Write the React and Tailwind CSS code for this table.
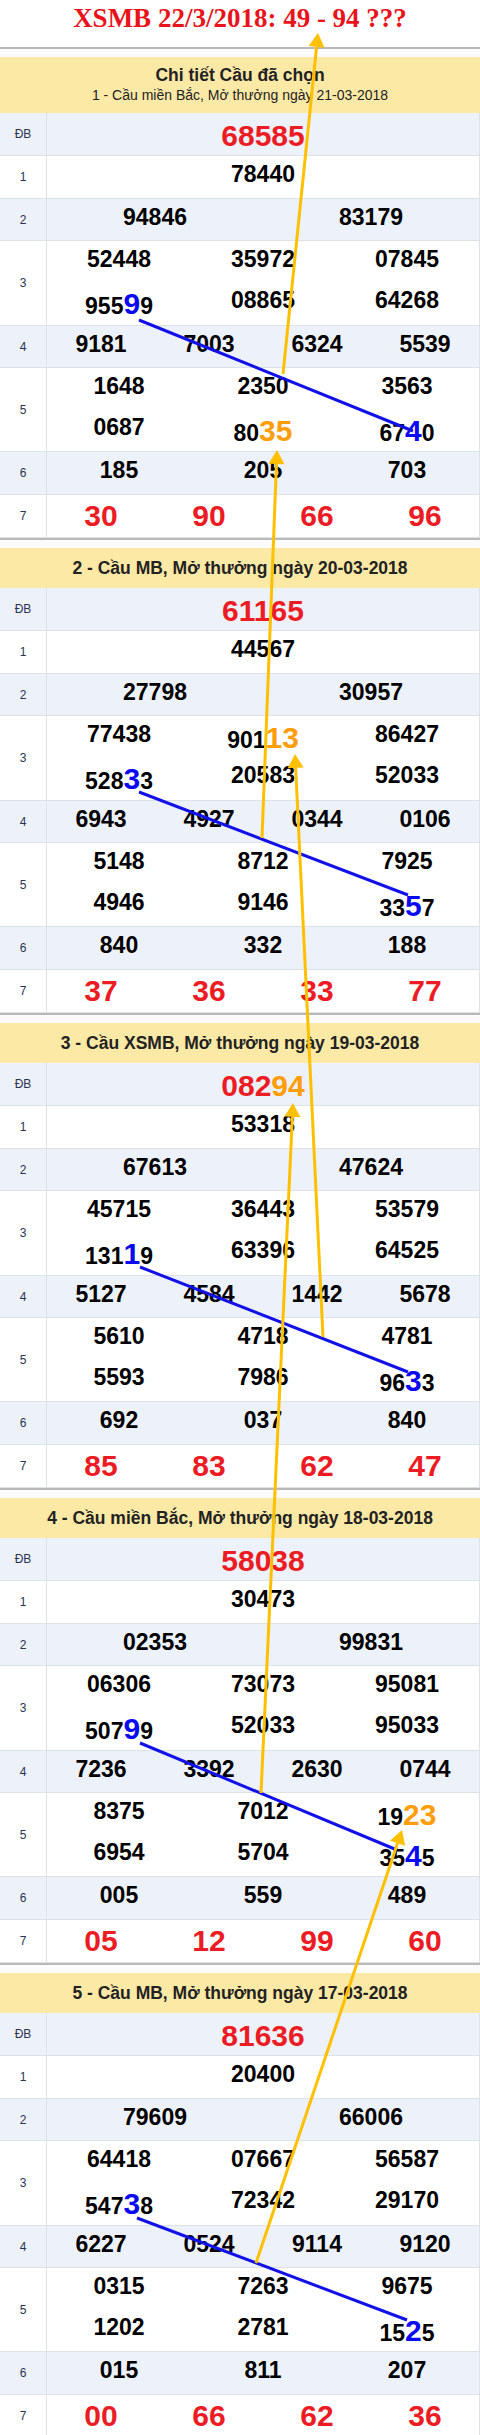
import React from "react";

const sections = [
  {
    head: ["Chi tiết Cầu đã chọn", "1 - Cầu miền Bắc, Mở thưởng ngày 21-03-2018"],
    db: "68585",
    r1: "78440",
    r2: ["94846", "83179"],
    r3: ["52448", "35972", "07845", "955[9]9", "08865", "64268"],
    r4: ["9181", "7003", "6324", "5539"],
    r5: ["1648", "2350", "3563", "0687", "80{35}", "67[4]0"],
    r6: ["185", "205", "703"],
    r7: ["30", "90", "66", "96"],
  },
  {
    head: ["2 - Cầu MB, Mở thưởng ngày 20-03-2018"],
    db: "61165",
    r1: "44567",
    r2: ["27798", "30957"],
    r3: ["77438", "901{13}", "86427", "528[3]3", "20583", "52033"],
    r4: ["6943", "4927", "0344", "0106"],
    r5: ["5148", "8712", "7925", "4946", "9146", "33[5]7"],
    r6: ["840", "332", "188"],
    r7: ["37", "36", "33", "77"],
  },
  {
    head: ["3 - Cầu XSMB, Mở thưởng ngày 19-03-2018"],
    db: "082{94}",
    r1: "53318",
    r2: ["67613", "47624"],
    r3: ["45715", "36443", "53579", "131[1]9", "63396", "64525"],
    r4: ["5127", "4584", "1442", "5678"],
    r5: ["5610", "4718", "4781", "5593", "7986", "96[3]3"],
    r6: ["692", "037", "840"],
    r7: ["85", "83", "62", "47"],
  },
  {
    head: ["4 - Cầu miền Bắc, Mở thưởng ngày 18-03-2018"],
    db: "58038",
    r1: "30473",
    r2: ["02353", "99831"],
    r3: ["06306", "73073", "95081", "507[9]9", "52033", "95033"],
    r4: ["7236", "3392", "2630", "0744"],
    r5: ["8375", "7012", "19{23}", "6954", "5704", "35[4]5"],
    r6: ["005", "559", "489"],
    r7: ["05", "12", "99", "60"],
  },
  {
    head: ["5 - Cầu MB, Mở thưởng ngày 17-03-2018"],
    db: "81636",
    r1: "20400",
    r2: ["79609", "66006"],
    r3: ["64418", "07667", "56587", "547[3]8", "72342", "29170"],
    r4: ["6227", "0524", "9114", "9120"],
    r5: ["0315", "7263", "9675", "1202", "2781", "15[2]5"],
    r6: ["015", "811", "207"],
    r7: ["00", "66", "62", "36"],
  },
];

function parse(str) {
  return str.split(/(\[[^\]]+\]|\{[^}]+\})/).filter(Boolean).map((s) => {
    if (s.startsWith("[")) return { t: s.slice(1, -1), c: "blue" };
    if (s.startsWith("{")) return { t: s.slice(1, -1), c: "orange" };
    return { t: s, c: null };
  });
}

function Num({ v, big }) {
  const segs = parse(v);
  return (
    <>
      {segs.map((s, i) => {
        if (s.c === "blue")
          return (
            <span key={i} className="text-[#0a0af0] text-[30px] leading-none">
              {s.t}
            </span>
          );
        if (s.c === "orange")
          return (
            <span key={i} className={big ? "text-[#ff9d0a]" : "text-[#ff9d0a] text-[30px] leading-none"}>
              {s.t}
            </span>
          );
        return <span key={i}>{s.t}</span>;
      })}
    </>
  );
}

const hasHl = (v) => /[\[{]/.test(v);

function Row({ label, bg, h, children }) {
  return (
    <div className={`flex border-b border-[#dde1e8] ${bg} ${h}`}>
      <div className="w-[47px] shrink-0 border-r border-[#dde1e8] flex items-center justify-center text-[12px] font-normal text-[#2a3352]">
        {label}
      </div>
      <div className="flex-1 min-w-0">{children}</div>
    </div>
  );
}

function Cell({ v, h }) {
  return (
    <div className={`${h} text-center leading-[36px] ${hasHl(v) ? "pt-[6px]" : ""}`}>
      <Num v={v} />
    </div>
  );
}

function Section({ s, first }) {
  return (
    <div>
      <div className="h-[10px] border-t-2 border-[#b9b9b9] bg-[#fbfbfb]" />
      {first ? (
        <div className="h-[56px] bg-[#fce9a6] text-center text-[#222] pt-[7px]">
          <div className="text-[17.5px] font-bold leading-[22px]">{s.head[0]}</div>
          <div className="text-[14px] leading-[19px]">{s.head[1]}</div>
        </div>
      ) : (
        <div className="h-[40px] bg-[#fce9a6] text-center text-[#222] text-[17.5px] font-bold leading-[40px]">
          {s.head[0]}
        </div>
      )}
      <div className="border-r border-[#dde1e8] text-black font-bold text-[23px]">
        <Row label="ĐB" bg="bg-[#edf1f9]" h="h-[43px]">
          <div className="text-center text-[30px] leading-[45px] text-[#ec1c24]">
            <Num v={s.db} big />
          </div>
        </Row>
        <Row label="1" bg="bg-white" h="h-[43px]">
          <div className="text-center leading-[36px]">
            <Num v={s.r1} />
          </div>
        </Row>
        <Row label="2" bg="bg-[#edf1f9]" h="h-[42px]">
          <div className="grid grid-cols-2">
            {s.r2.map((v, i) => (
              <Cell key={i} v={v} h="h-[41px]" />
            ))}
          </div>
        </Row>
        <Row label="3" bg="bg-white" h="h-[85px]">
          <div className="grid grid-cols-3">
            {s.r3.map((v, i) => (
              <Cell key={i} v={v} h={i < 3 ? "h-[41px]" : "h-[43px]"} />
            ))}
          </div>
        </Row>
        <Row label="4" bg="bg-[#edf1f9]" h="h-[42px]">
          <div className="grid grid-cols-4">
            {s.r4.map((v, i) => (
              <Cell key={i} v={v} h="h-[41px]" />
            ))}
          </div>
        </Row>
        <Row label="5" bg="bg-white" h="h-[84px]">
          <div className="grid grid-cols-3">
            {s.r5.map((v, i) => (
              <Cell key={i} v={v} h={i < 3 ? "h-[41px]" : "h-[42px]"} />
            ))}
          </div>
        </Row>
        <Row label="6" bg="bg-[#edf1f9]" h="h-[43px]">
          <div className="grid grid-cols-3">
            {s.r6.map((v, i) => (
              <Cell key={i} v={v} h="h-[42px]" />
            ))}
          </div>
        </Row>
        <Row label="7" bg="bg-white" h="h-[43px]">
          <div className="grid grid-cols-4 text-[30px] leading-[42px] text-[#ec1c24]">
            {s.r7.map((v, i) => (
              <div key={i} className="text-center">
                {v}
              </div>
            ))}
          </div>
        </Row>
      </div>
    </div>
  );
}

const yellow = [
  [283, 374, 318, 33],
  [262, 838, 277, 450],
  [323, 1337, 295, 754],
  [261, 1793, 293, 1103],
  [256, 2263, 402, 1830],
];
const blue = [
  [139, 320, 413, 431],
  [139, 792, 408, 895],
  [140, 1267, 408, 1372],
  [140, 1743, 397, 1850],
  [137, 2218, 407, 2320],
];

function Arrow({ x1, y1, x2, y2 }) {
  const dx = x2 - x1;
  const dy = y2 - y1;
  const len = Math.hypot(dx, dy);
  const ux = dx / len;
  const uy = dy / len;
  const bx = x2 - ux * 14;
  const by = y2 - uy * 14;
  const nx = -uy * 8;
  const ny = ux * 8;
  return (
    <g>
      <line x1={x1} y1={y1} x2={bx} y2={by} stroke="#ffc000" strokeWidth="3" />
      <polygon points={`${x2},${y2} ${bx + nx},${by + ny} ${bx - nx},${by - ny}`} fill="#ffc000" />
    </g>
  );
}

export default function App() {
  return (
    <div className="relative w-[480px] bg-white font-['Liberation_Sans',Arial,sans-serif] overflow-hidden h-[2435px]">
      <div className="h-[47px] text-center font-['Liberation_Serif','Times_New_Roman',serif] font-bold text-[27px] leading-[37px] text-[#e8141c]">
        XSMB 22/3/2018: 49 - 94 ???
      </div>
      {sections.map((s, i) => (
        <Section key={i} s={s} first={i === 0} />
      ))}
      <svg className="absolute top-0 left-0 pointer-events-none" width="480" height="2435" viewBox="0 0 480 2435">
        {blue.map(([a, b, c, d], i) => (
          <line key={i} x1={a} y1={b} x2={c} y2={d} stroke="#1212e8" strokeWidth="3" />
        ))}
        {yellow.map(([a, b, c, d], i) => (
          <Arrow key={i} x1={a} y1={b} x2={c} y2={d} />
        ))}
      </svg>
    </div>
  );
}
